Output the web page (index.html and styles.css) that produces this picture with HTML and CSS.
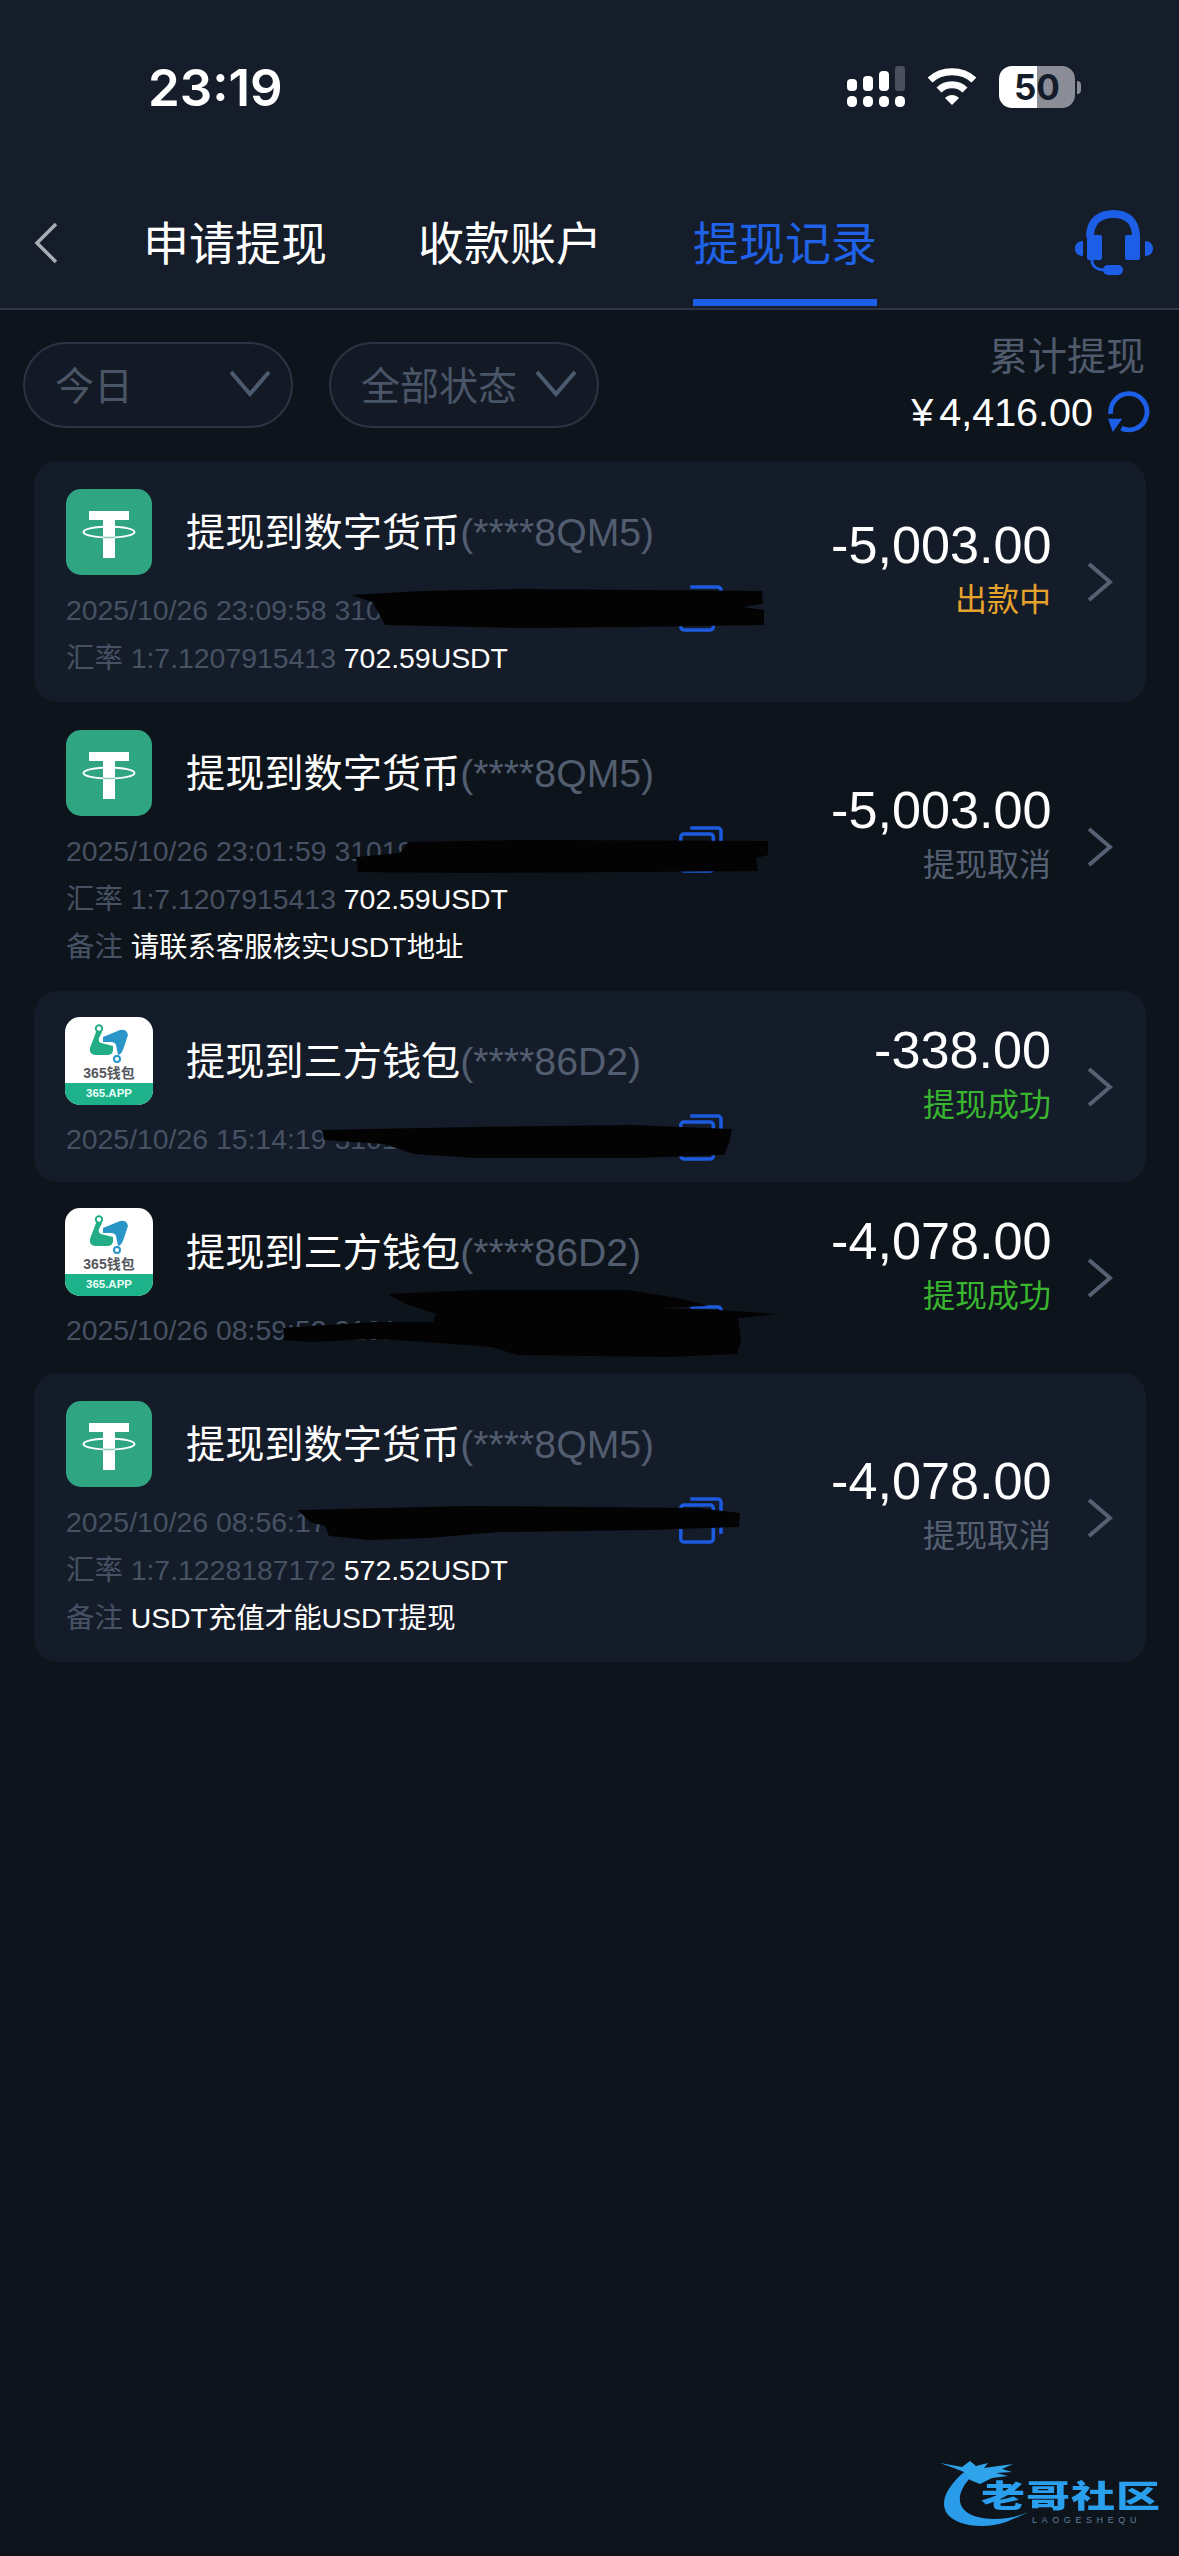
FILE: index.html
```html
<!DOCTYPE html>
<html lang="zh">
<head>
    <meta charset="UTF-8">
    <meta name="viewport" content="width=device-width, initial-scale=1.0">
    <title>提现记录</title>
    <link rel="stylesheet" href="styles.css">
</head>
<body>

<svg width="0" height="0" class="defs">
    <symbol id="tether" viewBox="0 0 86 86">
        <rect width="86" height="86" rx="15" fill="#2fa582"/>
        <path d="M23 22h40v9H49v38H37V31H23z" fill="#fff"/>
        <ellipse cx="43" cy="43" rx="25.5" ry="5.5" fill="none" stroke="#fff" stroke-width="2"/>
        <path d="M37 48.3q6 .5 12 0" fill="none" stroke="#8fc9b6" stroke-width="1.4"/>
    </symbol>
    <symbol id="wallet" viewBox="0 0 88 48">
        <path d="M31 15L25 31Q24 37 30 38L42 38Q48 38 48 33L48 29L36 26Q33 25 34 21L37 15z" fill="#22ad86"/>
        <path d="M38 20L55 13Q62 12 63 18L59 30Q57 37 53 38L51 28Q50 25 46 25L38 25z" fill="#2a96c8"/>
        <path d="M32 15l1-1M52 38l0 1" stroke="#22ad86" stroke-width="2"/>
        <circle cx="34" cy="11.500" r="3.200" fill="none" stroke="#22ad86" stroke-width="2"/>
        <circle cx="52" cy="42" r="3" fill="none" stroke="#2a96c8" stroke-width="2"/>
    </symbol>
    <symbol id="copy" viewBox="0 0 44 47">
        <path d="M13 3.500V2h26a3 3 0 0 1 3 3v32" fill="none" stroke="#1c5be0" stroke-width="3.500"/>
        <rect x="1.800" y="8" width="32.500" height="37" rx="3" fill="none" stroke="#1c5be0" stroke-width="3.500"/>
    </symbol>
    <symbol id="chevron" viewBox="0 0 26 40">
        <path d="M2 2l21 18L2 38" fill="none" stroke="#556173" stroke-width="4"/>
    </symbol>
    <symbol id="arrow-down" viewBox="0 0 42 28">
        <path d="M2 3l19 22L40 3" fill="none" stroke="#4d5b70" stroke-width="4"/>
    </symbol>
</svg>

<header class="top">
    <div class="status-bar">
        <span class="time">23:19</span>
        <div class="status-icons">
            <svg class="signal" width="58" height="42" viewBox="0 0 58 42">
                <g fill="#fff">
                    <rect x="0" y="13" width="10" height="12" rx="4"/>
                    <rect x="16" y="10" width="10" height="15" rx="4"/>
                    <rect x="32" y="5" width="10" height="20" rx="4"/>
                    <rect x="0" y="30" width="10" height="11" rx="4.500"/>
                    <rect x="16" y="30" width="10" height="11" rx="4.500"/>
                    <rect x="32" y="30" width="10" height="11" rx="4.500"/>
                    <rect x="48" y="30" width="10" height="11" rx="4.500"/>
                </g>
                <rect x="48" y="0" width="10" height="25" rx="3" fill="#4b515c"/>
            </svg>
            <svg class="wifi" width="50" height="38" viewBox="0 0 50 38">
                <path d="M3 12C15 1 35 1 47 12" fill="none" stroke="#fff" stroke-width="7"/>
                <path d="M12 22C19 15 31 15 38 22" fill="none" stroke="#fff" stroke-width="7"/>
                <path d="M18 30c4-4 10-4 14 0l-7 7z" fill="#fff"/>
            </svg>
            <div class="battery">
                <div class="battery-body"><span>50</span></div>
                <div class="battery-cap"></div>
            </div>
        </div>
    </div>
    <nav class="tabs">
        <svg class="back" width="26" height="42" viewBox="0 0 26 42">
            <path d="M23 2L4 21l19 19" fill="none" stroke="#a9aeb6" stroke-width="3.500"/>
        </svg>
        <a class="tab">申请提现</a>
        <a class="tab">收款账户</a>
        <a class="tab active">提现记录</a>
        <svg class="headset" width="78" height="66" viewBox="0 0 78 66">
            <path d="M15 27C15 10 26 4 38.500 4S61 10 61 27" fill="none" stroke="#1c5ee6" stroke-width="8"/>
            <rect x="12" y="25" width="15" height="25" rx="2" fill="#1c5ee6"/>
            <rect x="50" y="25" width="15" height="25" rx="2" fill="#1c5ee6"/>
            <path d="M8 31C3 31 0 34 0 38.500S3 46 8 46zM70 31c5 0 8 3 8 7.500s-3 7.500-8 7.500z" fill="#1c5ee6"/>
            <path d="M17 50c0 7 6 10 13 10" fill="none" stroke="#1c5ee6" stroke-width="3"/>
            <rect x="28" y="55" width="20" height="10" rx="5" fill="#1c5ee6"/>
        </svg>
    </nav>
</header>

<div class="filters">
    <div class="pill"><span>今日</span><svg width="42" height="28"><use href="#arrow-down"/></svg></div>
    <div class="pill"><span>全部状态</span><svg width="42" height="28"><use href="#arrow-down"/></svg></div>
    <div class="total">
        <div class="total-label">累计提现</div>
        <div class="total-value">
            <span class="yen">¥</span><span>4,416.00</span>
            <svg class="refresh" width="42" height="42" viewBox="0 0 44 44">
                <path d="M3 24A19 19 0 1 1 14 39" fill="none" stroke="#1c5ee6" stroke-width="5"/>
                <path d="M0 29h15L5 43z" fill="#1c5ee6"/>
            </svg>
        </div>
    </div>
</div>

<main class="records">

    <div class="record shaded">
        <div class="record-main">
            <div class="title-row">
                <svg class="logo"><use href="#tether"/></svg>
                <div class="title">提现到数字货币<span class="masked">(****8QM5)</span></div>
            </div>
            <div class="line date-line">2025/10/26 23:09:58 3101<svg class="copy"><use href="#copy"/></svg></div>
            <div class="line">汇率 1:7.1207915413 <b>702.59USDT</b></div>
        </div>
        <div class="record-side">
            <div class="amount">-5,003.00</div>
            <div class="state pending">出款中</div>
        </div>
        <svg class="chevron"><use href="#chevron"/></svg>
    </div>

    <div class="record">
        <div class="record-main">
            <div class="title-row">
                <svg class="logo"><use href="#tether"/></svg>
                <div class="title">提现到数字货币<span class="masked">(****8QM5)</span></div>
            </div>
            <div class="line date-line">2025/10/26 23:01:59 31019<svg class="copy"><use href="#copy"/></svg></div>
            <div class="line">汇率 1:7.1207915413 <b>702.59USDT</b></div>
            <div class="line">备注 <b>请联系客服核实USDT地址</b></div>
        </div>
        <div class="record-side">
            <div class="amount">-5,003.00</div>
            <div class="state cancelled">提现取消</div>
        </div>
        <svg class="chevron"><use href="#chevron"/></svg>
    </div>

    <div class="record shaded short">
        <div class="record-main">
            <div class="title-row">
                <div class="wallet-logo">
                    <svg class="wallet-mark"><use href="#wallet"/></svg>
                    <span class="wallet-name">365钱包</span>
                    <span class="wallet-band">365.APP</span>
                </div>
                <div class="title">提现到三方钱包<span class="masked">(****86D2)</span></div>
            </div>
            <div class="line date-line">2025/10/26 15:14:19 3101<svg class="copy"><use href="#copy"/></svg></div>
        </div>
        <div class="record-side">
            <div class="amount">-338.00</div>
            <div class="state success">提现成功</div>
        </div>
        <svg class="chevron"><use href="#chevron"/></svg>
    </div>

    <div class="record short">
        <div class="record-main">
            <div class="title-row">
                <div class="wallet-logo">
                    <svg class="wallet-mark"><use href="#wallet"/></svg>
                    <span class="wallet-name">365钱包</span>
                    <span class="wallet-band">365.APP</span>
                </div>
                <div class="title">提现到三方钱包<span class="masked">(****86D2)</span></div>
            </div>
            <div class="line date-line">2025/10/26 08:59:52 3101<svg class="copy"><use href="#copy"/></svg></div>
        </div>
        <div class="record-side">
            <div class="amount">-4,078.00</div>
            <div class="state success">提现成功</div>
        </div>
        <svg class="chevron"><use href="#chevron"/></svg>
    </div>

    <div class="record shaded">
        <div class="record-main">
            <div class="title-row">
                <svg class="logo"><use href="#tether"/></svg>
                <div class="title">提现到数字货币<span class="masked">(****8QM5)</span></div>
            </div>
            <div class="line date-line">2025/10/26 08:56:17 3101<svg class="copy"><use href="#copy"/></svg></div>
            <div class="line">汇率 1:7.1228187172 <b>572.52USDT</b></div>
            <div class="line">备注 <b>USDT充值才能USDT提现</b></div>
        </div>
        <div class="record-side">
            <div class="amount">-4,078.00</div>
            <div class="state cancelled">提现取消</div>
        </div>
        <svg class="chevron"><use href="#chevron"/></svg>
    </div>

</main>

<!-- black marker strokes over the order numbers -->
<svg class="scribbles" width="1179" height="2556" viewBox="0 0 1179 2556">
    <path d="M352 595L420 591L522 589L762 591L763 604L743 607L764 610L764 625L634 627L524 628L385 625L378 612L372 602z"/>
    <path d="M408 842l120-2 240 1 0 14-12 3 2 13-130 1-160 1-110-1-2-15 44-4z"/>
    <path d="M322 1130l150-3 160-2 100 4-3 14-5 12-90 3-160 0-60-4-30-10-60-4z"/>
    <path d="M388 1294l90-4 150 0 50 8 30 8-50 2 60 2 60 4-40 4 3 24-4 12-70 3-150-2-25-8-80-6-40-2-60 3-28-2-1-12 90-6 60 0 3-8-30-10z"/>
    <path d="M298 1510l170-4 230 2 42 5-1 14-90 3-150 2-70 6-60 2-40-4-4-10-15-4z"/>
</svg>

<div class="watermark">
    <svg class="dragon" width="100" height="72" viewBox="0 0 100 72">
        <path d="M24 12C8 26 0 40 6 52C14 66 44 70 66 62C76 58 85 54 88 52C76 58 52 62 34 56C18 50 14 36 30 18z" fill="#2a9be8"/>
        <path d="M0 3L22 7L30 1L36 6L48 3L44 8L73 4L62 9L72 12L56 13L68 16L52 18L40 24L30 20L24 12L14 8z" fill="#2fa4ea"/>
    </svg>
    <div class="watermark-name">老哥社区</div>
    <div class="watermark-sub">LAOGESHEQU</div>
</div>

</body>
</html>
```

FILE: styles.css
```css
* {
    box-sizing: border-box;
}
body {
    margin: 0;
    width: 1179px;
    height: 2556px;
    position: relative;
    overflow: hidden;
    font-family: "Liberation Sans", "Noto Sans CJK SC", sans-serif;
    background-color: #0e141c;
    color: #fff;
}
.defs {
    position: absolute;
}

/* header */
.top {
    height: 310px;
    background-color: #161d2a;
    border-bottom: 2px solid #2d3542;
}
.status-bar {
    height: 176px;
    display: flex;
    align-items: flex-start;
    justify-content: space-between;
    padding: 60px 98px 0 148px;
}
.time {
    font-family: Inter, sans-serif;
    font-size: 51px;
    font-weight: 600;
    line-height: 56px;
}
.status-icons {
    display: flex;
    align-items: center;
    gap: 22px;
    padding-top: 6px;
}
.battery {
    display: flex;
    align-items: center;
    gap: 2px;
}
.battery-body {
    width: 76px;
    height: 42px;
    border-radius: 13px;
    background: linear-gradient(90deg, #fff 50%, #8b8e96 50%);
    text-align: center;
    font-family: Inter, sans-serif;
    font-size: 35px;
    font-weight: 700;
    line-height: 42px;
    color: #161d2a;
}
.battery-cap {
    width: 4px;
    height: 13px;
    border-radius: 0 5px 5px 0;
    background-color: #8b8e96;
}
.tabs {
    height: 132px;
    display: flex;
    align-items: flex-start;
    padding: 0 26px 0 33px;
}
.back {
    margin: 46px 84px 0 0;
}
.tab {
    width: 184px;
    height: 130px;
    margin-right: 91px;
    padding-top: 40px;
    font-size: 46px;
    line-height: 56px;
    text-align: center;
    white-space: nowrap;
}
.tab.active {
    color: #1f62e8;
    border-bottom: 7px solid #1c5ee6;
}
.headset {
    margin: 34px 0 0 auto;
}

/* filters */
.filters {
    height: 151px;
    display: flex;
    padding: 32px 34px 0 23px;
    gap: 36px;
}
.pill {
    width: 270px;
    height: 86px;
    border: 2px solid #2b3443;
    border-radius: 43px;
    background-color: #131a25;
    display: flex;
    align-items: center;
    justify-content: space-between;
    padding: 0 20px 4px 30px;
    font-size: 39px;
    color: #4a5567;
}
.total {
    margin: -10px 0 0 auto;
    text-align: right;
}
.total-label {
    font-size: 39px;
    line-height: 50px;
    color: #4f5b6d;
}
.total-value {
    display: flex;
    align-items: center;
    margin: 7px -5px 0 0;
    font-size: 39.5px;
    line-height: 46px;
}
.yen {
    margin-right: 6px;
}
.refresh {
    margin-left: 15px;
}

/* record list */
.records {
    padding: 0 33px 0 34px;
}
.record {
    display: flex;
    align-items: center;
    border-radius: 24px;
    padding: 28px 33px 20px 32px;
}
.record.short {
    padding: 27px 33px 19px 32px;
}
.record.shaded {
    background-color: #151c29;
}
.record-main {
    flex: 1;
    min-width: 0;
}
.title-row {
    display: flex;
    align-items: center;
    height: 86px;
    gap: 34px;
    margin-bottom: 11px;
}
.logo {
    width: 86px;
    height: 86px;
    flex-shrink: 0;
}
.wallet-logo {
    width: 88px;
    height: 88px;
    flex-shrink: 0;
    margin: 0 -1px;
    border-radius: 15px;
    overflow: hidden;
    background-color: #fff;
    display: flex;
    flex-direction: column;
    align-items: center;
}
.wallet-mark {
    width: 88px;
    height: 48px;
    flex-shrink: 0;
}
.wallet-name {
    font-size: 14px;
    line-height: 17px;
    font-weight: 700;
    color: #55585d;
    white-space: nowrap;
    margin-bottom: 1px;
}
.wallet-band {
    width: 100%;
    flex: 1;
    background-color: #1db28a;
    color: #eafff8;
    font-size: 11.5px;
    font-weight: 700;
    line-height: 21px;
    text-align: center;
}
.title {
    font-size: 39.2px;
    line-height: 50px;
    white-space: nowrap;
    margin-top: 2px;
}
.masked {
    color: #525e70;
}
.line {
    height: 48px;
    font-size: 28.4px;
    line-height: 48px;
    color: #465163;
    white-space: nowrap;
}
.line b {
    font-weight: normal;
    color: #fff;
}
.date-line {
    position: relative;
}
.copy {
    position: absolute;
    left: 613px;
    top: -1px;
    width: 44px;
    height: 47px;
}
.record-side {
    width: 220px;
    margin-bottom: 35px;
    text-align: right;
    flex-shrink: 0;
}
.amount {
    font-size: 52.2px;
    line-height: 62px;
}
.state {
    font-size: 32px;
    line-height: 44px;
    margin-top: 2px;
}
.pending {
    color: #e5a32c;
}
.cancelled {
    color: #556173;
}
.success {
    color: #3ab52f;
}
.chevron {
    width: 26px;
    height: 40px;
    margin: 0 0 8px 36px;
    flex-shrink: 0;
}
.scribbles {
    position: absolute;
    left: 0;
    top: 0;
    fill: #030303;
    pointer-events: none;
}

/* watermark */
.watermark {
    position: absolute;
    left: 940px;
    top: 2460px;
    width: 230px;
    height: 80px;
}
.dragon {
    position: absolute;
    left: 0;
    top: 0;
    filter: blur(0.6px);
}
.watermark-name {
    position: absolute;
    left: 41px;
    top: 21px;
    font-size: 44px;
    line-height: 44px;
    font-weight: 900;
    letter-spacing: 1px;
    color: #2a9fee;
    white-space: nowrap;
    transform: scaleY(0.7);
    transform-origin: top left;
}
.watermark-sub {
    position: absolute;
    left: 92px;
    top: 55px;
    font-size: 9px;
    letter-spacing: 4.6px;
    color: #5e7f9c;
    white-space: nowrap;
}
```
